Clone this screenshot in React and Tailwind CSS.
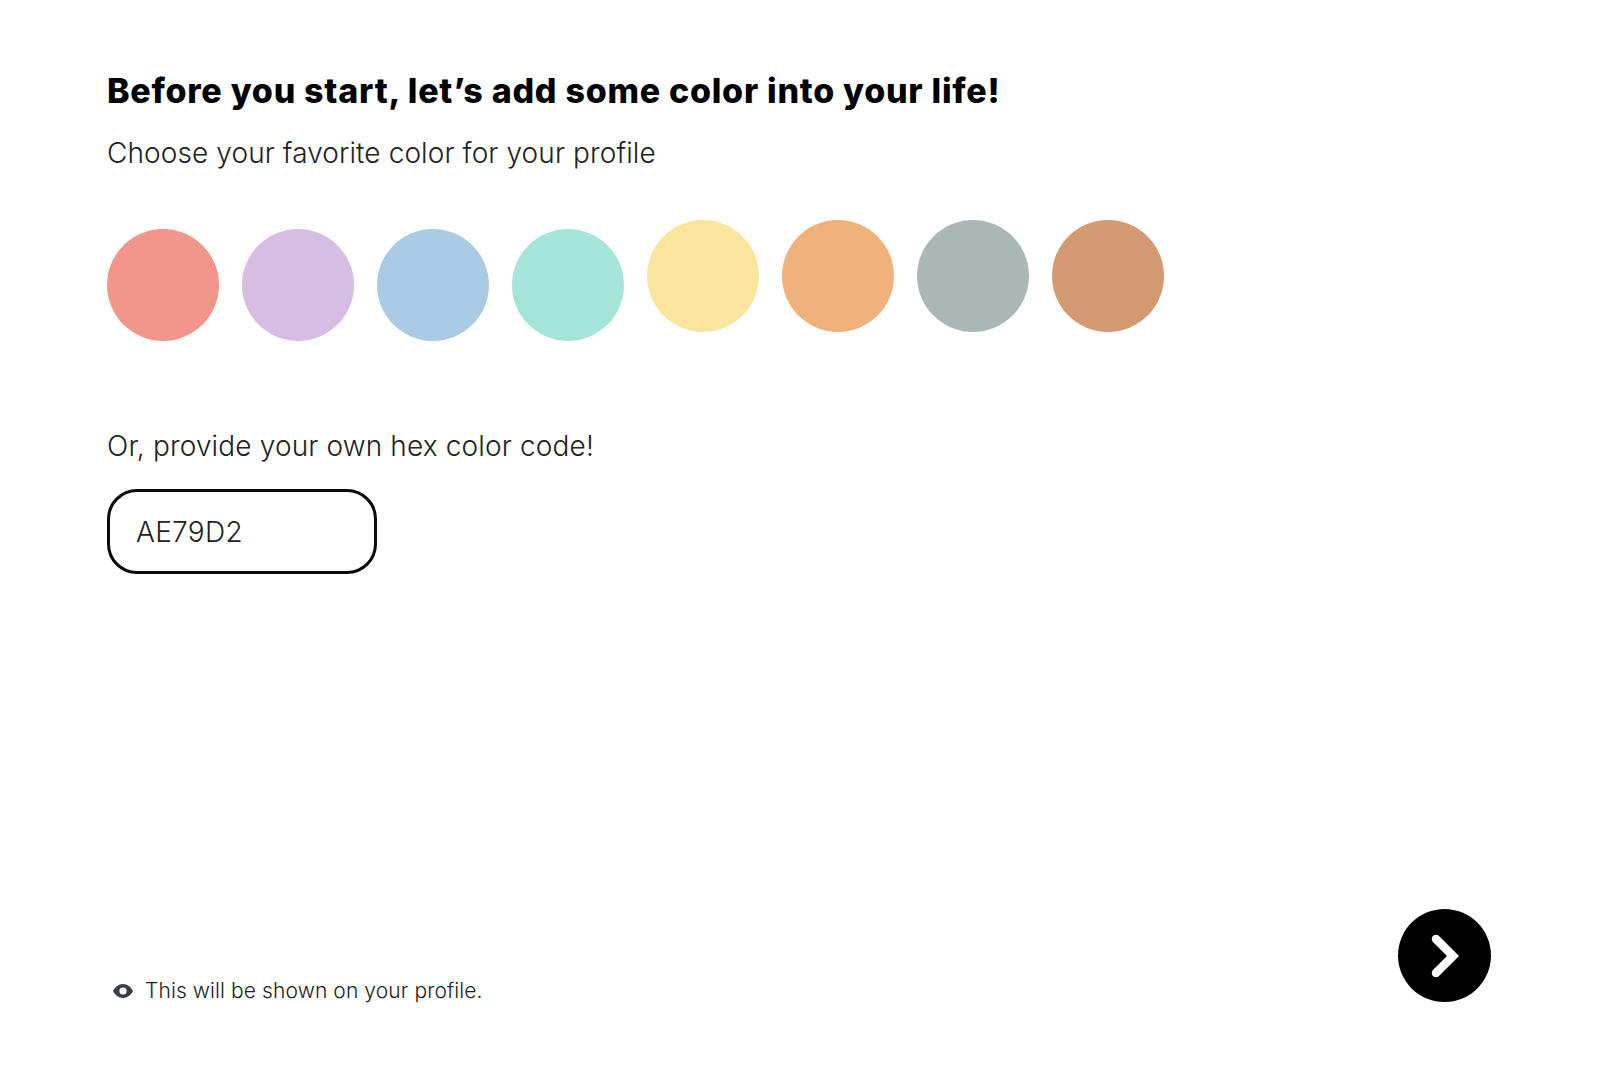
import React from "react";

const colors = [
  { hex: "bg-[#f2958a]", low: true },
  { hex: "bg-[#d7bde4]", low: true },
  { hex: "bg-[#a9cbe3]", low: true },
  { hex: "bg-[#a5e4d9]", low: true },
  { hex: "bg-[#f9e59d]", low: false },
  { hex: "bg-[#f0b27a]", low: false },
  { hex: "bg-[#a9b7b6]", low: false },
  { hex: "bg-[#d39971]", low: false },
];

const App = () => {
  return (
    <div className="flex h-[1085px] flex-col bg-white pl-[107px] pr-[109px] pt-[71px] pb-[83px] font-['Inter',sans-serif] text-[#222]">
      <h1 className="text-[34px] font-extrabold leading-[40px] tracking-[0.73px] text-black">
        Before you start, let’s add some color into your life!
      </h1>
      <p className="mt-[26px] text-[28px] font-light leading-[33px] tracking-[0.1px]">
        Choose your favorite color for your profile
      </p>

      <div className="mt-[50px] flex gap-[23px]">
        {colors.map((c, i) => (
          <div
            key={i}
            className={`h-[112px] w-[112px] rounded-full ${c.hex} ${c.low ? "mt-[9px]" : "mb-[9px]"}`}
          />
        ))}
      </div>

      <p className="mt-[89px] text-[28px] font-light leading-[33px] tracking-[0.15px]">
        Or, provide your own hex color code!
      </p>

      <div className="mt-[26px] flex h-[85px] w-[270px] items-center rounded-[30px] border-[3px] border-[#0a0a0a] pl-[26px] pt-[1px] text-[28px] font-light tracking-[0.3px]">
        AE79D2
      </div>

      <div className="mt-auto flex items-end justify-between">
        <div className="mb-[-2px] flex items-center pl-[6px]">
          <svg width="20" height="14" viewBox="0 0 20 14" fill="#3a3d4a">
            <path
              fillRule="evenodd"
              d="M10 0c4.4 0 8 2.900 10 7-2 4.100-5.600 7-10 7S2 11.100 0 7c2-4.100 5.600-7 10-7zm0 3.400a3.600 3.600 0 1 0 0 7.200 3.600 3.600 0 0 0 0-7.200z"
            />
          </svg>
          <span className="ml-[12px] text-[21px] font-light leading-[26px] tracking-[0.1px]">
            This will be shown on your profile.
          </span>
        </div>

        <button className="flex h-[93px] w-[93px] items-center justify-center rounded-full bg-black">
          <svg width="30" height="44" viewBox="0 0 30 44" fill="none">
            <path
              d="M6 5l17 17L6 39"
              stroke="#fff"
              strokeWidth="8.500"
              strokeLinecap="round"
              strokeLinejoin="miter"
            />
          </svg>
        </button>
      </div>
    </div>
  );
};

export default App;
